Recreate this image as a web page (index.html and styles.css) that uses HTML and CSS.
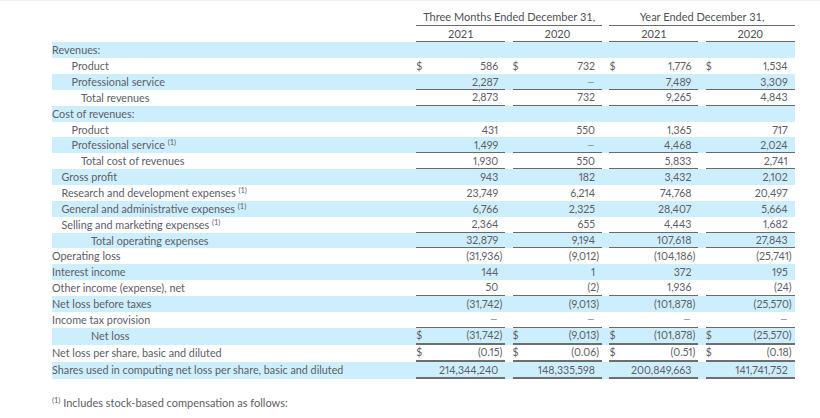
FILE: index.html
```html
<!DOCTYPE html>
<html>
<head>
<meta charset="utf-8">
<link rel="stylesheet" href="styles.css">
</head>
<body>
<div class="sheet">
  <div class="row head1">
    <div></div>
    <div class="grp">Three Months Ended December 31,</div>
    <div class="grp">Year Ended December 31,</div>
  </div>
  <div class="row head2">
    <div></div>
    <div class="yr">2021</div>
    <div class="yr">2020</div>
    <div class="yr">2021</div>
    <div class="yr">2020</div>
  </div>

  <div class="row band">
    <div class="lbl">Revenues:</div>
    <div class="c"></div><div class="c"></div><div class="c"></div><div class="c"></div>
  </div>
  <div class="row">
    <div class="lbl i2">Product</div>
    <div class="c"><span>$</span><span>586</span></div>
    <div class="c"><span>$</span><span>732</span></div>
    <div class="c"><span>$</span><span>1,776</span></div>
    <div class="c"><span>$</span><span>1,534</span></div>
  </div>
  <div class="row band">
    <div class="lbl i2">Professional service</div>
    <div class="c ul"><span></span><span>2,287</span></div>
    <div class="c ul"><span></span><span class="dash">–</span></div>
    <div class="c ul"><span></span><span>7,489</span></div>
    <div class="c ul"><span></span><span>3,309</span></div>
  </div>
  <div class="row">
    <div class="lbl i3">Total revenues</div>
    <div class="c ul"><span></span><span>2,873</span></div>
    <div class="c ul"><span></span><span>732</span></div>
    <div class="c ul"><span></span><span>9,265</span></div>
    <div class="c ul"><span></span><span>4,843</span></div>
  </div>
  <div class="row band">
    <div class="lbl">Cost of revenues:</div>
    <div class="c"></div><div class="c"></div><div class="c"></div><div class="c"></div>
  </div>
  <div class="row">
    <div class="lbl i2">Product</div>
    <div class="c"><span></span><span>431</span></div>
    <div class="c"><span></span><span>550</span></div>
    <div class="c"><span></span><span>1,365</span></div>
    <div class="c"><span></span><span>717</span></div>
  </div>
  <div class="row band">
    <div class="lbl i2">Professional service <sup>(1)</sup></div>
    <div class="c ul"><span></span><span>1,499</span></div>
    <div class="c ul"><span></span><span class="dash">–</span></div>
    <div class="c ul"><span></span><span>4,468</span></div>
    <div class="c ul"><span></span><span>2,024</span></div>
  </div>
  <div class="row">
    <div class="lbl i3">Total cost of revenues</div>
    <div class="c ul"><span></span><span>1,930</span></div>
    <div class="c ul"><span></span><span>550</span></div>
    <div class="c ul"><span></span><span>5,833</span></div>
    <div class="c ul"><span></span><span>2,741</span></div>
  </div>
  <div class="row band">
    <div class="lbl i1">Gross profit</div>
    <div class="c"><span></span><span>943</span></div>
    <div class="c"><span></span><span>182</span></div>
    <div class="c"><span></span><span>3,432</span></div>
    <div class="c"><span></span><span>2,102</span></div>
  </div>
  <div class="row">
    <div class="lbl i1">Research and development expenses <sup>(1)</sup></div>
    <div class="c"><span></span><span>23,749</span></div>
    <div class="c"><span></span><span>6,214</span></div>
    <div class="c"><span></span><span>74,768</span></div>
    <div class="c"><span></span><span>20,497</span></div>
  </div>
  <div class="row band">
    <div class="lbl i1">General and administrative expenses <sup>(1)</sup></div>
    <div class="c"><span></span><span>6,766</span></div>
    <div class="c"><span></span><span>2,325</span></div>
    <div class="c"><span></span><span>28,407</span></div>
    <div class="c"><span></span><span>5,664</span></div>
  </div>
  <div class="row">
    <div class="lbl i1">Selling and marketing expenses <sup>(1)</sup></div>
    <div class="c ul"><span></span><span>2,364</span></div>
    <div class="c ul"><span></span><span>655</span></div>
    <div class="c ul"><span></span><span>4,443</span></div>
    <div class="c ul"><span></span><span>1,682</span></div>
  </div>
  <div class="row band">
    <div class="lbl i4">Total operating expenses</div>
    <div class="c ul"><span></span><span>32,879</span></div>
    <div class="c ul"><span></span><span>9,194</span></div>
    <div class="c ul"><span></span><span>107,618</span></div>
    <div class="c ul"><span></span><span>27,843</span></div>
  </div>
  <div class="row">
    <div class="lbl">Operating loss</div>
    <div class="c"><span></span><span>(31,936<span class="cp">)</span></span></div>
    <div class="c"><span></span><span>(9,012<span class="cp">)</span></span></div>
    <div class="c"><span></span><span>(104,186<span class="cp">)</span></span></div>
    <div class="c"><span></span><span>(25,741<span class="cp">)</span></span></div>
  </div>
  <div class="row band">
    <div class="lbl">Interest income</div>
    <div class="c"><span></span><span>144</span></div>
    <div class="c"><span></span><span>1</span></div>
    <div class="c"><span></span><span>372</span></div>
    <div class="c"><span></span><span>195</span></div>
  </div>
  <div class="row">
    <div class="lbl">Other income (expense), net</div>
    <div class="c ul"><span></span><span>50</span></div>
    <div class="c ul"><span></span><span>(2<span class="cp">)</span></span></div>
    <div class="c ul"><span></span><span>1,936</span></div>
    <div class="c ul"><span></span><span>(24<span class="cp">)</span></span></div>
  </div>
  <div class="row band">
    <div class="lbl">Net loss before taxes</div>
    <div class="c"><span></span><span>(31,742<span class="cp">)</span></span></div>
    <div class="c"><span></span><span>(9,013<span class="cp">)</span></span></div>
    <div class="c"><span></span><span>(101,878<span class="cp">)</span></span></div>
    <div class="c"><span></span><span>(25,570<span class="cp">)</span></span></div>
  </div>
  <div class="row">
    <div class="lbl">Income tax provision</div>
    <div class="c ul"><span></span><span class="dash">–</span></div>
    <div class="c ul"><span></span><span class="dash">–</span></div>
    <div class="c ul"><span></span><span class="dash">–</span></div>
    <div class="c ul"><span></span><span class="dash">–</span></div>
  </div>
  <div class="row band dbl">
    <div class="lbl i4">Net loss</div>
    <div class="c dl"><span>$</span><span>(31,742<span class="cp">)</span></span></div>
    <div class="c dl"><span>$</span><span>(9,013<span class="cp">)</span></span></div>
    <div class="c dl"><span>$</span><span>(101,878<span class="cp">)</span></span></div>
    <div class="c dl"><span>$</span><span>(25,570<span class="cp">)</span></span></div>
  </div>
  <div class="row dbl">
    <div class="lbl">Net loss per share, basic and diluted</div>
    <div class="c dl"><span>$</span><span>(0.15<span class="cp">)</span></span></div>
    <div class="c dl"><span>$</span><span>(0.06<span class="cp">)</span></span></div>
    <div class="c dl"><span>$</span><span>(0.51<span class="cp">)</span></span></div>
    <div class="c dl"><span>$</span><span>(0.18<span class="cp">)</span></span></div>
  </div>
  <div class="row band dbl">
    <div class="lbl">Shares used in computing net loss per share, basic and diluted</div>
    <div class="c dl"><span></span><span>214,344,240</span></div>
    <div class="c dl"><span></span><span>148,335,598</span></div>
    <div class="c dl"><span></span><span>200,849,663</span></div>
    <div class="c dl"><span></span><span>141,741,752</span></div>
  </div>

  <p class="note"><sup>(1)</sup> Includes stock-based compensation as follows:</p>
</div>
</body>
</html>
```

FILE: styles.css
```css
html, body {
  margin: 0;
  padding: 0;
  background: #ffffff;
}
body {
  border-top: 1px solid #f1f1f1;
  font-family: Lato, "Noto Sans", sans-serif;
  font-size: 11px;
  color: #5d5e68;
}
.sheet {
  padding: 8px 0 0 52px;
  width: 743px;
}
.row {
  display: grid;
  grid-template-columns: 357px 89px 89.5px 89px 89px;
  column-gap: 7.3px;
  height: 15.85px;
  align-items: stretch;
}
.row.band {
  background: #cdeefd;
}
.row.dbl {
  height: 17.2px;
}
.head1 {
  height: 17px;
}
.head2 {
  height: 16.4px;
}
.grp {
  grid-column: span 2;
  text-align: center;
  border-bottom: 1px solid #6a6a6a;
  line-height: 16px;
  color: #4f5058;
}
.yr {
  text-align: center;
  border-bottom: 1px solid #6a6a6a;
  line-height: 15px;
  color: #4f5058;
}
.lbl {
  line-height: 15.85px;
  white-space: nowrap;
  font-size: 10.8px;
}
.i1 { padding-left: 9.5px; }
.i2 { padding-left: 19.5px; }
.i3 { padding-left: 29px; }
.i4 { padding-left: 39px; }
.c {
  display: flex;
  justify-content: space-between;
  align-items: center;
  padding-right: 7px;
  box-sizing: border-box;
  white-space: nowrap;
  font-variant-numeric: proportional-nums;
  font-size: 10.6px;
}
.c.ul {
  border-bottom: 1px solid #6a6a6a;
}
.c.dl {
  border-bottom: 2px solid #6e6e6e;
}
.cp {
  margin-right: -4px;
}
.dash {
  color: #8a8b92;
  display: inline-block;
  transform: scaleX(1.4);
  transform-origin: right center;
}
sup {
  font-size: 7.5px;
  vertical-align: 4px;
  line-height: 0;
}
.note {
  margin: 17px 0 0 0;
  line-height: 14px;
}
```
